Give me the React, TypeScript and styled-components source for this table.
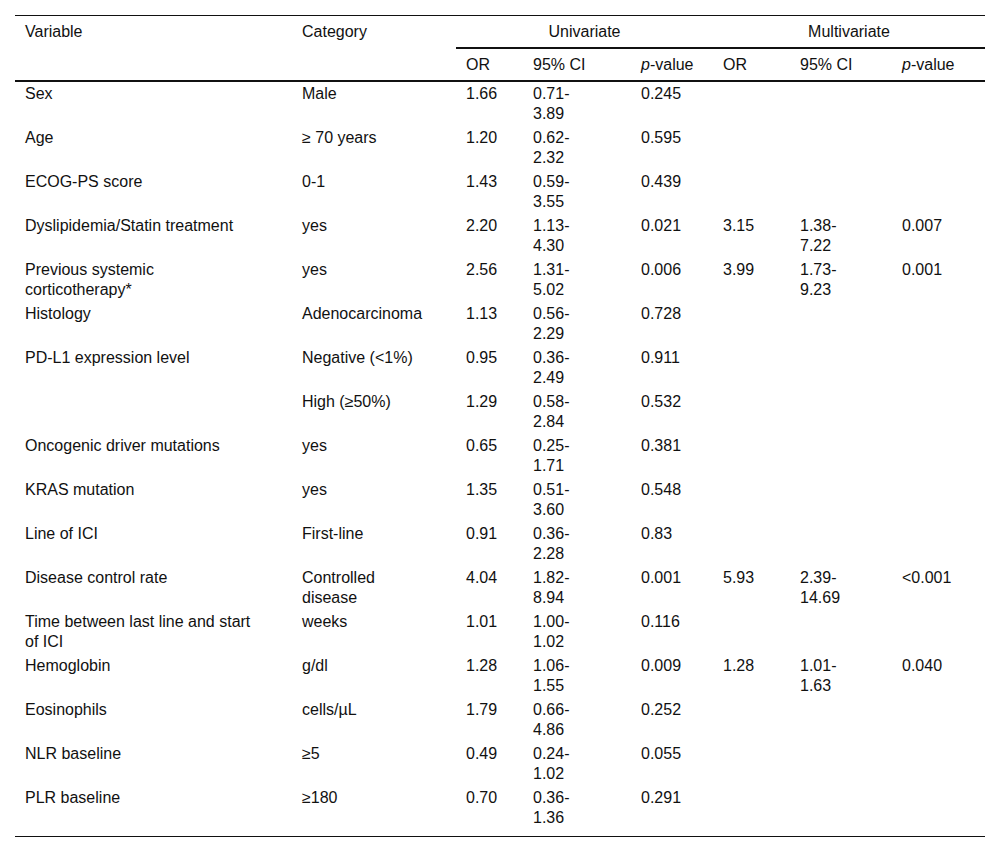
import React from "react";
import styled, { createGlobalStyle } from "styled-components";

const GlobalStyle = createGlobalStyle`
  html, body {
    margin: 0;
    padding: 0;
    background: #ffffff;
  }
  body {
    font-family: "Liberation Sans", Arial, sans-serif;
    color: #111;
  }
`;

type Col = { width: number; pr: number };

// column widths and right padding (the right padding makes the narrow wraps)
const cols: Col[] = [
  { width: 277, pr: 35 },
  { width: 164, pr: 29 },
  { width: 67, pr: 10 },
  { width: 108, pr: 43 },
  { width: 82, pr: 10 },
  { width: 77, pr: 10 },
  { width: 102, pr: 37 },
  { width: 93, pr: 10 },
];

type Row = {
  variable: string;
  category: string;
  uni: [string, string, string];
  multi?: [string, string, string];
};

const rows: Row[] = [
  { variable: "Sex", category: "Male", uni: ["1.66", "0.71-3.89", "0.245"] },
  { variable: "Age", category: "≥ 70 years", uni: ["1.20", "0.62-2.32", "0.595"] },
  { variable: "ECOG-PS score", category: "0-1", uni: ["1.43", "0.59-3.55", "0.439"] },
  {
    variable: "Dyslipidemia/Statin treatment",
    category: "yes",
    uni: ["2.20", "1.13-4.30", "0.021"],
    multi: ["3.15", "1.38-7.22", "0.007"],
  },
  {
    variable: "Previous systemic corticotherapy*",
    category: "yes",
    uni: ["2.56", "1.31-5.02", "0.006"],
    multi: ["3.99", "1.73-9.23", "0.001"],
  },
  { variable: "Histology", category: "Adenocarcinoma", uni: ["1.13", "0.56-2.29", "0.728"] },
  { variable: "PD-L1 expression level", category: "Negative (<1%)", uni: ["0.95", "0.36-2.49", "0.911"] },
  { variable: "", category: "High (≥50%)", uni: ["1.29", "0.58-2.84", "0.532"] },
  { variable: "Oncogenic driver mutations", category: "yes", uni: ["0.65", "0.25-1.71", "0.381"] },
  { variable: "KRAS mutation", category: "yes", uni: ["1.35", "0.51-3.60", "0.548"] },
  { variable: "Line of ICI", category: "First-line", uni: ["0.91", "0.36-2.28", "0.83"] },
  {
    variable: "Disease control rate",
    category: "Controlled disease",
    uni: ["4.04", "1.82-8.94", "0.001"],
    multi: ["5.93", "2.39-14.69", "<0.001"],
  },
  {
    variable: "Time between last line and start of ICI",
    category: "weeks",
    uni: ["1.01", "1.00-1.02", "0.116"],
  },
  {
    variable: "Hemoglobin",
    category: "g/dl",
    uni: ["1.28", "1.06-1.55", "0.009"],
    multi: ["1.28", "1.01-1.63", "0.040"],
  },
  { variable: "Eosinophils", category: "cells/µL", uni: ["1.79", "0.66-4.86", "0.252"] },
  { variable: "NLR baseline", category: "≥5", uni: ["0.49", "0.24-1.02", "0.055"] },
  { variable: "PLR baseline", category: "≥180", uni: ["0.70", "0.36-1.36", "0.291"] },
];

const Page = styled.div`
  padding: 15px 15px 0 15px;
`;

const Table = styled.table`
  width: 970px;
  table-layout: fixed;
  border-collapse: collapse;
  border-top: 1px solid #111;
  border-bottom: 1px solid #111;
  font-size: 16px;
`;

const HeadCell = styled.th<{ $pr?: number; $center?: boolean; $rule?: boolean }>`
  font-weight: normal;
  text-align: ${(p) => (p.$center ? "center" : "left")};
  vertical-align: top;
  line-height: 22px;
  padding: 5px ${(p) => p.$pr ?? 10}px 4px 10px;
  border-bottom: ${(p) => (p.$rule ? "2px solid #111" : "none")};
`;

const SubHeadRow = styled.tr`
  border-bottom: 2px solid #111;
`;

const Cell = styled.td<{ $pr: number }>`
  vertical-align: top;
  line-height: 20px;
  padding: 2px ${(p) => p.$pr}px 2px 10px;
`;

const BodyRow = styled.tr`
  &:last-child td {
    padding-bottom: 8px;
  }
`;

const PLabel = () => (
  <>
    <i>p</i>-value
  </>
);

export default function App() {
  return (
    <Page>
      <GlobalStyle />
      <Table>
        <colgroup>
          {cols.map((c, i) => (
            <col key={i} style={{ width: c.width }} />
          ))}
        </colgroup>
        <thead>
          <tr>
            <HeadCell rowSpan={2} $pr={cols[0].pr}>
              Variable
            </HeadCell>
            <HeadCell rowSpan={2} $pr={cols[1].pr}>
              Category
            </HeadCell>
            <HeadCell colSpan={3} $center $rule>
              Univariate
            </HeadCell>
            <HeadCell colSpan={3} $center $rule>
              Multivariate
            </HeadCell>
          </tr>
          <SubHeadRow>
            <HeadCell>OR</HeadCell>
            <HeadCell>95% CI</HeadCell>
            <HeadCell>
              <PLabel />
            </HeadCell>
            <HeadCell>OR</HeadCell>
            <HeadCell>95% CI</HeadCell>
            <HeadCell>
              <PLabel />
            </HeadCell>
          </SubHeadRow>
        </thead>
        <tbody>
          {rows.map((r, i) => {
            const values = [r.variable, r.category, ...r.uni, ...(r.multi ?? ["", "", ""])];
            return (
              <BodyRow key={i}>
                {values.map((v, j) => (
                  <Cell key={j} $pr={cols[j].pr}>
                    {v}
                  </Cell>
                ))}
              </BodyRow>
            );
          })}
        </tbody>
      </Table>
    </Page>
  );
}
